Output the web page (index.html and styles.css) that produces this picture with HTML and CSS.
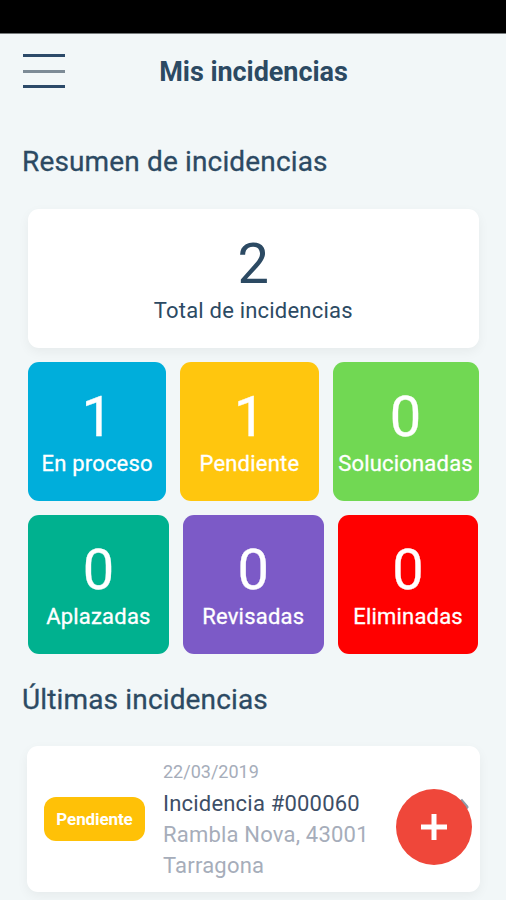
FILE: index.html
```html
<!DOCTYPE html>
<html lang="es">
<head>
    <meta charset="UTF-8">
    <meta name="viewport" content="width=device-width, initial-scale=1.0">
    <title>Mis incidencias</title>
    <link rel="stylesheet" href="styles.css">
</head>
<body>
    <div class="status-bar"></div>

    <header>
        <button class="menu" aria-label="Menú">
            <span></span>
            <span></span>
            <span></span>
        </button>
        <h1>Mis incidencias</h1>
    </header>

    <main>
        <h2 class="summary-title">Resumen de incidencias</h2>

        <div class="summary">
            <div class="card total">
                <div class="number">2</div>
                <div class="label">Total de incidencias</div>
            </div>
            <div class="row row-top">
                <div class="tile in-progress">
                    <div class="number">1</div>
                    <div class="label">En proceso</div>
                </div>
                <div class="tile pending">
                    <div class="number">1</div>
                    <div class="label">Pendiente</div>
                </div>
                <div class="tile solved">
                    <div class="number">0</div>
                    <div class="label">Solucionadas</div>
                </div>
            </div>
            <div class="row">
                <div class="tile postponed">
                    <div class="number">0</div>
                    <div class="label">Aplazadas</div>
                </div>
                <div class="tile reviewed">
                    <div class="number">0</div>
                    <div class="label">Revisadas</div>
                </div>
                <div class="tile deleted">
                    <div class="number">0</div>
                    <div class="label">Eliminadas</div>
                </div>
            </div>
        </div>

        <h2 class="latest-title">Últimas incidencias</h2>

        <div class="card incident">
            <div class="badge">Pendiente</div>
            <div class="info">
                <div class="date">22/03/2019</div>
                <div class="name">Incidencia #000060</div>
                <div class="address">Rambla Nova, 43001</div>
                <div class="address">Tarragona</div>
            </div>
            <svg class="arrow" width="10" height="18" viewBox="0 0 10 18">
                <path d="M1.5 2 7.500 9l-6 7" fill="none" stroke="#8f9aa6" stroke-width="4" stroke-linejoin="round"/>
            </svg>
        </div>
    </main>

    <button class="add" aria-label="Añadir incidencia">
        <svg width="28" height="28" viewBox="0 0 28 28">
            <path d="M14 1v26M1 14h26" stroke="#fff" stroke-width="5"/>
        </svg>
    </button>
</body>
</html>
```
FILE: styles.css
```css
* {
    box-sizing: border-box;
}
body {
    font-family: Roboto, "Liberation Sans", sans-serif;
    margin: 0;
    height: 900px;
    overflow: hidden;
    background-color: #f2f7f8;
    color: #2c4a63;
}
.status-bar {
    height: 34px;
    background-color: #000;
    border-bottom: 1px solid #777b7c;
}
header {
    display: grid;
    grid-template-columns: 43px 1fr 43px;
    align-items: center;
    height: 74px;
    padding: 0 22px 0 23px;
}
.menu {
    display: flex;
    flex-direction: column;
    justify-content: space-between;
    width: 43px;
    height: 34px;
    padding: 0;
    border: 0;
    background: none;
}
.menu span {
    width: 42px;
    height: 3px;
    background-color: #2c4a69;
}
.menu span:nth-child(2) {
    background-color: #7d8b96;
}
h1 {
    margin: 0;
    padding-top: 2px;
    font-size: 27px;
    line-height: 32px;
    font-weight: 700;
    letter-spacing: -0.050px;
    text-align: center;
}
h2 {
    margin: 0;
    padding-left: 22px;
    font-size: 28px;
    line-height: 32px;
    font-weight: 400;
    letter-spacing: 0.150px;
    -webkit-text-stroke: 0.300px currentColor;
}
.summary-title {
    margin-top: 38px;
}
.summary {
    display: flex;
    flex-direction: column;
    gap: 14px;
    margin: 31px 27.500px 0 28px;
}
.card {
    background-color: #fff;
    border-radius: 11px;
    box-shadow: 0 4px 12px rgba(0, 0, 0, 0.05);
}
.total,
.tile {
    height: 139px;
    padding-top: 24px;
    text-align: center;
}
.row {
    display: grid;
    grid-template-columns: repeat(3, 1fr);
    gap: 14px;
}
.row-top {
    grid-template-columns: 1fr 1fr 146px;
}
.tile {
    border-radius: 11px;
    color: #fff;
    -webkit-text-stroke: 0.300px currentColor;
}
.number {
    font-size: 56px;
    line-height: 62px;
}
.label {
    font-size: 22px;
    line-height: 32px;
    letter-spacing: 0.200px;
}
.in-progress {
    background-color: #00aedb;
}
.pending {
    background-color: #ffc60e;
}
.solved {
    background-color: #71d853;
}
.postponed {
    background-color: #00b18f;
}
.reviewed {
    background-color: #7c5ac7;
}
.deleted {
    background-color: #ff0000;
}
.latest-title {
    margin-top: 30px;
}
.incident {
    display: grid;
    grid-template-columns: 101px 1fr 10px;
    column-gap: 18px;
    align-items: center;
    height: 146px;
    margin: 30px 26px 0 27px;
    padding: 0 11px 0 17px;
}
.badge {
    height: 44px;
    border-radius: 12px;
    background-color: #ffc107;
    color: #fff;
    font-size: 17px;
    line-height: 44px;
    font-weight: 700;
    letter-spacing: -0.100px;
    text-align: center;
}
.info {
    font-size: 22px;
    line-height: 31px;
    letter-spacing: 0.200px;
    color: #a6adba;
}
.date {
    padding-bottom: 2px;
    font-size: 18px;
    line-height: 29px;
    letter-spacing: 0;
}
.name {
    color: #3d4e66;
}
.arrow {
    margin-top: -24px;
}
.add {
    position: fixed;
    left: 396px;
    top: 789px;
    display: flex;
    align-items: center;
    justify-content: center;
    width: 76px;
    height: 76px;
    padding: 0;
    border: 0;
    border-radius: 50%;
    background-color: #ef473a;
}
```
